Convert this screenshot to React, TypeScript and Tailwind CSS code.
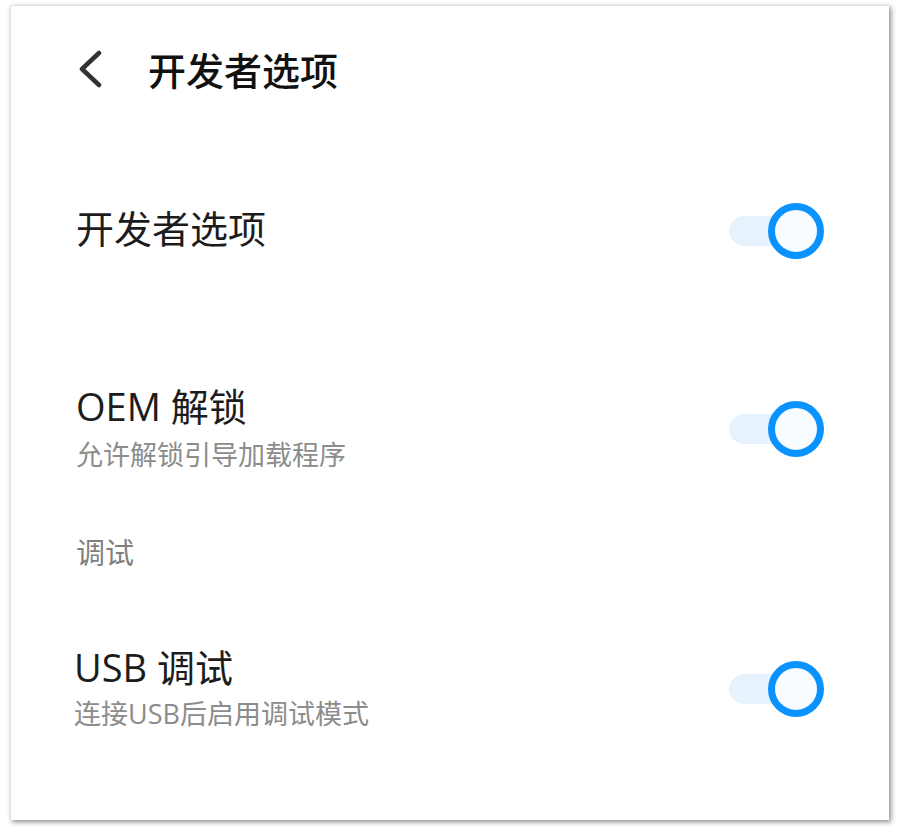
function Toggle() {
  return (
    <div className="relative h-[56px] w-[95px] shrink-0">
      <div className="absolute left-0 top-[13px] h-[30px] w-[70px] rounded-full bg-[#e6f3fe]" />
      <div className="absolute right-0 top-0 h-[56px] w-[56px] rounded-full border-[7px] border-[#0a93ff] bg-[#f8fbff]" />
    </div>
  );
}

export default function App() {
  const font = { fontFamily: '"Open Sans", "Noto Sans CJK SC", sans-serif' };
  return (
    <div className="min-h-screen bg-white pl-[10px] pt-[5px]" style={font}>
      <div className="flex h-[815px] w-[879px] flex-col border-l border-t border-[#e2e2e2] bg-white pl-[65px] pr-[65px] shadow-[2px_2px_5px_rgba(0,0,0,0.45)]">
        <div className="flex h-[134px] items-center">
          <svg width="26" height="38" viewBox="0 0 26 38" className="mb-[8px] ml-[1px]">
            <polyline
              points="22,3 5,19 22,35"
              fill="none"
              stroke="#333333"
              strokeWidth="4.5"
              strokeLinecap="round"
              strokeLinejoin="round"
            />
          </svg>
          <h1 className="mb-[6px] ml-[45px] text-[38px] font-medium leading-[48px] text-[#111]">开发者选项</h1>
        </div>

        <div className="flex h-[182px] items-center justify-between">
          <span className="mb-[6px] text-[38px] leading-[48px] text-[#1c1c1c]">开发者选项</span>
          <Toggle />
        </div>

        <div className="mt-[60px] flex items-center justify-between">
          <div className="flex flex-col">
            <span className="text-[38px] leading-[48px] text-[#1c1c1c]">OEM 解锁</span>
            <span className="mt-[5px] text-[27px] leading-[40px] text-[#8c8c8c]">允许解锁引导加载程序</span>
          </div>
          <Toggle />
        </div>

        <div className="mt-[58px] text-[29px] leading-[40px] text-[#808080]">调试</div>

        <div className="mt-[70px] flex items-center justify-between">
          <div className="flex flex-col">
            <span className="-ml-[2px] text-[38px] leading-[48px] text-[#1c1c1c]">USB 调试</span>
            <span className="-ml-[2px] mt-[3px] text-[27px] leading-[40px] text-[#8c8c8c]">连接USB后启用调试模式</span>
          </div>
          <Toggle />
        </div>
      </div>
    </div>
  );
}
